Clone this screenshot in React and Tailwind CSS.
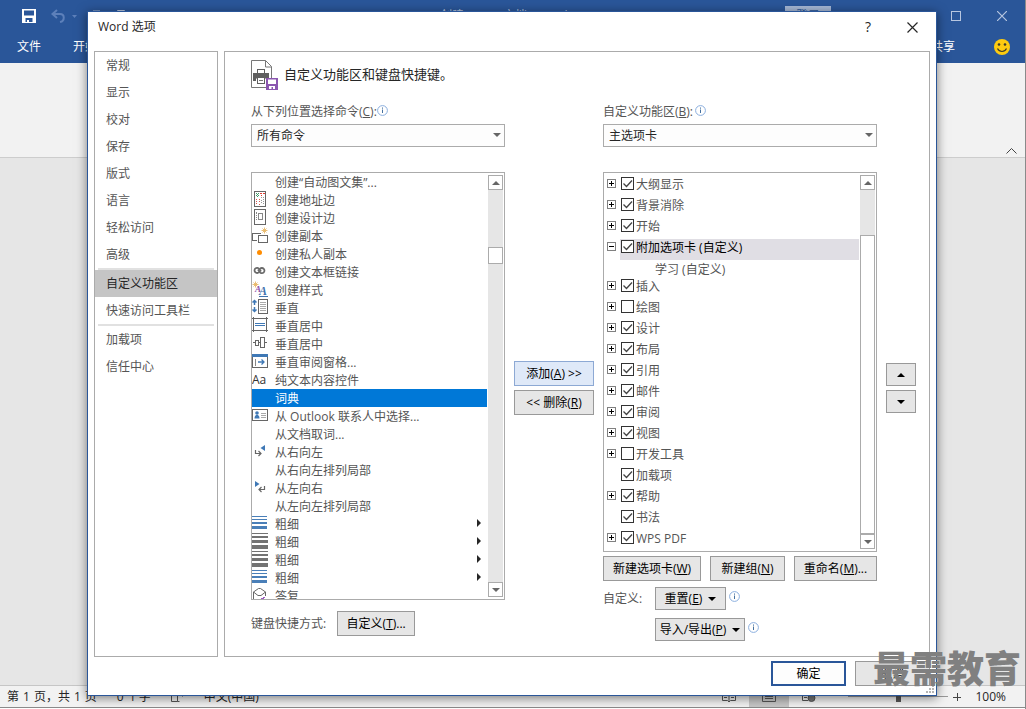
import { useState } from "react";

const navGroups = [
  ["常规", "显示", "校对", "保存", "版式", "语言", "轻松访问", "高级"],
  ["自定义功能区", "快速访问工具栏"],
  ["加载项", "信任中心"],
];

const commands = [
  { label: "创建“自动图文集”..." },
  { label: "创建地址边", icon: "address" },
  { label: "创建设计边", icon: "design" },
  { label: "创建副本", icon: "copy" },
  { label: "创建私人副本", icon: "dot" },
  { label: "创建文本框链接", icon: "link" },
  { label: "创建样式", icon: "style" },
  { label: "垂直", icon: "vertical" },
  { label: "垂直居中", icon: "middle" },
  { label: "垂直居中", icon: "alignMiddle" },
  { label: "垂直审阅窗格...", icon: "pane" },
  { label: "纯文本内容控件", icon: "plainText" },
  { label: "词典" },
  { label: "从 Outlook 联系人中选择...", icon: "contact" },
  { label: "从文档取词..." },
  { label: "从右向左", icon: "rtl" },
  { label: "从右向左排列局部" },
  { label: "从左向右", icon: "ltr" },
  { label: "从左向左排列局部" },
  { label: "粗细", icon: "weightBlue", submenu: true },
  { label: "粗细", icon: "weightGray", submenu: true },
  { label: "粗细", icon: "weightGray", submenu: true },
  { label: "粗细", icon: "weightBlue", submenu: true },
  { label: "答复", icon: "reply" },
];

const initialTabs = [
  { label: "大纲显示", checked: true, expand: "+" },
  { label: "背景消除", checked: true, expand: "+" },
  { label: "开始", checked: true, expand: "+" },
  { label: "附加选项卡 (自定义)", checked: true, expand: "-", child: "学习 (自定义)" },
  { label: "插入", checked: true, expand: "+" },
  { label: "绘图", checked: false, expand: "+" },
  { label: "设计", checked: true, expand: "+" },
  { label: "布局", checked: true, expand: "+" },
  { label: "引用", checked: true, expand: "+" },
  { label: "邮件", checked: true, expand: "+" },
  { label: "审阅", checked: true, expand: "+" },
  { label: "视图", checked: true, expand: "+" },
  { label: "开发工具", checked: false, expand: "+" },
  { label: "加载项", checked: true },
  { label: "帮助", checked: true, expand: "+" },
  { label: "书法", checked: true },
  { label: "WPS PDF", checked: true, expand: "+" },
];

const star = (x, y) => (
  <path
    d={`M${x} ${y - 3}v6M${x - 3} ${y}h6M${x - 2} ${y - 2}l4 4M${x + 2} ${y - 2}l-4 4`}
    stroke="#e8b765"
    strokeWidth="0.9"
    shapeRendering="auto"
  />
);

const icons = {
  address: (
    <>
      <rect x="2.5" y="0.5" width="11" height="15" stroke="#666" />
      <path d="M8 2.5h2M11 2.5h2M9 4.5h1" stroke="#e03c31" />
      <path d="M4 2.5h1M6 2.5h1M5 3.5h1M4 4.5h1M6 4.5h1M5 5.5h1" stroke="#3f9c6a" />
      <path d="M4 8.5h1M4 10.5h1M4 12.5h1M7 8.5h1M7 10.5h1M7 13.5h1" stroke="#d8574e" />
      <path d="M11 6.5h1M11 8.5h1M11 10.5h1M9 9.5h1M9 11.5h1M9 6.5h1M11 12.5h1" stroke="#999" />
    </>
  ),
  design: (
    <>
      <rect x="2.5" y="0.5" width="11" height="15" stroke="#666" />
      <rect x="6.5" y="4.5" width="4" height="6" stroke="#888" />
      <path d="M4.5 3v2M4.5 6v1M4.5 8v1M4.5 10v1" stroke="#888" />
    </>
  ),
  copy: (
    <>
      <path d="M9 6.5H0.5v7H5" stroke="#666" />
      <rect x="6.5" y="8.5" width="9" height="7" stroke="#666" />
      {star(12.5, 3.5)}
    </>
  ),
  dot: <circle cx="7.5" cy="7.5" r="2.5" fill="#ff8c00" shapeRendering="auto" />,
  link: (
    <g stroke="#6a6a6a" strokeWidth="1.8" shapeRendering="auto">
      <path d="M7 9.2A2.6 2.6 0 1 1 7.2 5.8L9 8.5" />
      <path d="M8 5.8A2.6 2.6 0 1 1 7.8 9.2L6 6.5" />
    </g>
  ),
  style: (
    <>
      {star(3.5, 3.5)}
      <g fontFamily="Liberation Serif, serif" fontStyle="italic" fontWeight="bold">
        <text x="3" y="11" fontSize="9" fill="#8a4ea8">A</text>
        <text x="7" y="14" fontSize="12" fill="#3f73ae">A</text>
      </g>
      <path d="M7 15.5h9" stroke="#3f73ae" />
    </>
  ),
  vertical: (
    <>
      <path
        d="M2.5 1.5v4.500M2.5 8v4.5M0.5 3.5l2-2 2 2M0.5 10.5l2 2 2-2"
        stroke="#3f78b5"
        strokeWidth="1.5"
        shapeRendering="auto"
      />
      <rect x="6.5" y="0.5" width="9" height="14" stroke="#666" />
      <path d="M8 3.5h6M8 5.5h6M8 7.5h6M8 9.5h6M8 11.5h6" stroke="#aaa" />
    </>
  ),
  middle: (
    <>
      <path d="M1.5 0v15M14.5 0v15M0 1.5h16M0 13.5h16" stroke="#666" />
      <path d="M3 6.5h10M3 8.5h10" stroke="#3f78b5" />
    </>
  ),
  alignMiddle: (
    <>
      <path d="M1 7.5h2M7 7.5h1M13 7.5h2" stroke="#666" />
      <rect x="3.5" y="5.5" width="3" height="5" stroke="#666" />
      <rect x="8.5" y="2.5" width="4" height="10" stroke="#666" />
    </>
  ),
  pane: (
    <>
      <rect x="0.5" y="1.5" width="15" height="13" stroke="#666" />
      <rect x="0" y="1" width="16" height="3" fill="#3f78b5" />
      <path d="M3.5 6v7" stroke="#888" />
      <path d="M6 9h6M9.5 6.5L12 9l-2.5 2.5" stroke="#3f78b5" strokeWidth="1.3" shapeRendering="auto" />
    </>
  ),
  plainText: (
    <text x="0" y="13" fontSize="12" fill="#333" fontFamily="Open Sans, sans-serif">Aa</text>
  ),
  contact: (
    <>
      <rect x="0.5" y="2.5" width="15" height="11" stroke="#666" />
      <circle cx="5" cy="6" r="1.8" fill="#3f78b5" shapeRendering="auto" />
      <path d="M2.5 11.5c0-5 5-5 5 0z" fill="#3f78b5" shapeRendering="auto" />
      <path d="M9 6.5h5M9 8.5h5M9 10.5h5" stroke="#aaa" />
    </>
  ),
  rtl: (
    <>
      <path d="M13 2v6L8.5 5z" fill="#3f78b5" shapeRendering="auto" />
      <path d="M3.5 7v3.5H9M6.5 8L9 10.5 6.5 13" stroke="#666" strokeWidth="1.2" shapeRendering="auto" />
    </>
  ),
  ltr: (
    <>
      <path d="M3 2v6l4.5-3z" fill="#3f78b5" shapeRendering="auto" />
      <path d="M12.5 7v3.5H7M9.5 8L7 10.5 9.5 13" stroke="#666" strokeWidth="1.2" shapeRendering="auto" />
    </>
  ),
  weightBlue: <path d="M0 1h15v1H0zM0 4h15v1H0zM0 7h15v2H0zM0 11h15v3H0z" fill="#4a7fb8" />,
  weightGray: <path d="M0 0h16v1H0zM0 3h16v2H0zM0 7h16v3H0zM0 12h16v4H0z" fill="#737373" />,
  reply: (
    <>
      <path d="M1.5 13V5l5-3.5h2l5 3.5v4M1.5 5l4.5 3.500h3L13.5 5" stroke="#666" shapeRendering="auto" />
      <path d="M9 11.5h3M11 10.5h2" stroke="#9a5cc0" />
    </>
  ),
};

const Icon = ({ name }) => (
  <svg width="16" height="16" viewBox="0 0 16 16" fill="none" shapeRendering="crispEdges" className="shrink-0">
    {name && icons[name]}
  </svg>
);

const Triangle = ({ up, className }) => (
  <svg width="8" height="4" viewBox="0 0 8 4" fill="currentColor" className={className} aria-hidden="true">
    <path d={up ? "M0 4h8L4 0z" : "M0 0h8L4 4z"} />
  </svg>
);

const InfoIcon = () => (
  <svg width="11" height="11" viewBox="0 0 11 11" fill="none" className="shrink-0" aria-hidden="true">
    <circle cx="5.5" cy="5.5" r="4.9" stroke="#8aaede" />
    <path d="M5.5 4.5V8M5.5 2.5v1.2" stroke="#44709f" />
  </svg>
);

const FloppyIcon = ({ className }) => (
  <svg viewBox="0 0 14 14" className={className} aria-hidden="true">
    <path d="M0 0h14v14H0zM2 1.5v5h10v-5zM3.5 9v4H5v-2h2v2h3.5V9z" fill="currentColor" fillRule="evenodd" />
  </svg>
);

const Button = ({ className = "", children, ...rest }) => (
  <button
    type="button"
    className={`flex items-center justify-center border border-[#999] bg-[#e6e6e6] text-black whitespace-nowrap ${className}`}
    {...rest}
  >
    {children}
  </button>
);

const ScrollBar = ({ before, thumb }) => (
  <div className="my-0.5 mr-px flex w-[15px] shrink-0 flex-col bg-[#e6e6e6] text-[#666]">
    <button
      type="button"
      aria-label="向上滚动"
      className="flex h-[15px] shrink-0 items-center justify-center border border-[#ababab] bg-white"
    >
      <Triangle up />
    </button>
    <div className={before}></div>
    <div className={`border border-[#ababab] bg-white ${thumb}`}></div>
    <button
      type="button"
      aria-label="向下滚动"
      className="mt-auto flex h-[15px] shrink-0 items-center justify-center border border-[#ababab] bg-white"
    >
      <Triangle />
    </button>
  </div>
);

const Dropdown = ({ id, value }) => (
  <div className="relative">
    <select
      id={id}
      defaultValue={value}
      className="block h-[23px] w-full appearance-none border border-[#ababab] bg-[#fdfdfd] pl-[5px] pr-5 text-[#262626]"
    >
      <option>{value}</option>
    </select>
    <Triangle className="pointer-events-none absolute right-1 top-[9px] text-[#666]" />
  </div>
);

const AppWindow = () => (
  <div className="flex h-full flex-col border-r border-[#8a8a8a] bg-[#e6e6e6]">
    <header className="bg-[#2a5699] text-white">
      <div className="flex h-[31px] items-center justify-between pl-[22px] pr-[18px]">
        <div className="flex items-center">
          <FloppyIcon className="size-3.5" />
          <svg width="26" height="14" viewBox="0 0 26 14" fill="none" className="ml-[15px]" aria-hidden="true">
            <path d="M1.5 5H9c5 0 5 7 0 8M6 1L1.5 5 6 9" stroke="#5d80ba" strokeWidth="2" />
            <path d="M21 6h5l-2.5 3z" fill="#5d80ba" />
          </svg>
          <svg width="70" height="12" viewBox="0 0 70 12" fill="none" className="ml-3" aria-hidden="true">
            <path d="M4 1h7M28.5 12V0.500h7l3 3V12" stroke="#b7c6e0" />
            <path d="M63 2h5" stroke="#b7c6e0" strokeWidth="2" />
          </svg>
        </div>
        <span className="ml-16 text-[#b7c6e0]">创建 DOCX 文档 - Word</span>
        <div className="flex items-center">
          <button type="button" className="h-5 w-[46px] bg-[#a6b8d6] text-[#2a5699]">登录</button>
          <svg width="13" height="10" viewBox="0 0 13 10" fill="none" className="ml-[26px]" aria-hidden="true">
            <path d="M0.5 0.5h12v9H0.5zM0 3.5h13" stroke="#a6b8d6" />
          </svg>
          <svg width="10" height="10" viewBox="0 0 10 10" fill="none" className="ml-[81px]" aria-hidden="true">
            <rect x="0.5" y="0.5" width="9" height="9" stroke="#b7c6e0" />
          </svg>
          <svg width="10" height="10" viewBox="0 0 10 10" fill="none" className="ml-9" aria-hidden="true">
            <path d="M0 0l10 10M10 0L0 10" stroke="#b7c6e0" strokeWidth="1.2" />
          </svg>
        </div>
      </div>
      <div className="flex h-8 items-center justify-between pl-[17px] pr-[15px]">
        <nav className="flex gap-8">
          <a href="#file">文件</a>
          <a href="#home">开始</a>
        </nav>
        <div className="flex items-center gap-[39px]">
          <a href="#share">共享</a>
          <svg width="16" height="16" viewBox="0 0 16 16" fill="none" aria-hidden="true">
            <circle cx="8" cy="8" r="8" fill="#fdcb10" />
            <circle cx="5" cy="5.5" r="1.3" fill="#3e3a2a" />
            <circle cx="11" cy="5.5" r="1.3" fill="#3e3a2a" />
            <path d="M3.5 9.5c2 4 7 4 9 0" stroke="#3e3a2a" strokeWidth="1.2" />
          </svg>
        </div>
      </div>
    </header>
    <div className="flex h-[95px] items-end justify-end border-b border-[#cdcdcd] bg-[#f2f2f2] pb-[3px] pr-2">
      <svg width="11" height="6" viewBox="0 0 11 6" fill="none" aria-hidden="true">
        <path d="M0.5 5.5l5-5 5 5" stroke="#444" />
      </svg>
    </div>
    <div className="flex-1"></div>
    <footer className="flex h-[22px] items-center justify-between border-t border-[#c6c6c6] bg-[#f2f2f2] pl-[7px] pr-[19px] text-[#262626]">
      <div className="flex items-center">
        <div className="flex gap-1">
          <span>第</span>
          <span>1</span>
          <span>页，共</span>
          <span>1</span>
          <span>页</span>
        </div>
        <span className="ml-5">0 个字</span>
        <svg width="13" height="10" viewBox="0 0 13 10" fill="none" className="ml-5" aria-hidden="true">
          <path d="M6.5 9.5h-6v-8h6zM6.5 1.5h5v3M6.5 9.5h2" stroke="#555" />
        </svg>
        <span className="ml-5">中文(中国)</span>
      </div>
      <div className="flex h-full items-center">
        <svg width="14" height="12" viewBox="0 0 14 12" fill="none" aria-hidden="true">
          <path
            d="M0.5 1.5h5l1.5 1 1.5-1h5v8h-5L7 11 5.5 9.5h-5zM7 2v9M2 4.5h3M2 6.5h3M9 4.5h3M9 6.5h3"
            stroke="#555"
          />
        </svg>
        <div className="ml-[13px] flex h-full w-10 items-center justify-center bg-[#c6c6c6]">
          <svg width="14" height="12" viewBox="0 0 14 12" fill="none" aria-hidden="true">
            <path d="M0.5 0.5h13v10H0.5zM3 3.5h8M3 5.5h8M3 7.5h8" stroke="#555" />
          </svg>
        </div>
        <svg width="14" height="12" viewBox="0 0 14 12" fill="none" className="ml-[13px]" aria-hidden="true">
          <path d="M6 9.5H0.5v-8h11M2 4.5h4M2 6.5h3" stroke="#555" />
          <circle cx="9.5" cy="7" r="3.5" fill="#777" stroke="#555" />
        </svg>
        <input
          type="range"
          aria-label="缩放"
          defaultValue="50"
          className="ml-8 h-px w-[100px] appearance-none bg-[#999] [&::-webkit-slider-thumb]:h-[11px] [&::-webkit-slider-thumb]:w-[5px] [&::-webkit-slider-thumb]:appearance-none [&::-webkit-slider-thumb]:bg-[#555]"
        />
        <svg width="8" height="8" viewBox="0 0 8 8" fill="none" className="ml-[5px]" aria-hidden="true">
          <path d="M0 4.5h8M4.5 0v8" stroke="#444" />
        </svg>
        <span className="ml-3.5">100%</span>
      </div>
    </footer>
    <div className="h-px bg-[#8a8a8a]"></div>
    <div className="h-px bg-white"></div>
  </div>
);

const CommandList = () => {
  const [selected, setSelected] = useState(12);

  return (
    <div className="flex min-h-0 flex-1 border border-[#ababab] bg-white">
      <ul className="mr-px h-full min-w-0 flex-1 overflow-hidden">
        {commands.map((command, index) => (
          <li key={index}>
            <button
              type="button"
              onClick={() => setSelected(index)}
              className={`flex h-[18px] w-full items-start gap-[7px] text-left ${
                index === selected ? "bg-[#0078d7] text-white" : ""
              }`}
            >
              <Icon name={command.icon} />
              <span className="flex-1 leading-5">{command.label}</span>
              {command.submenu && (
                <svg width="4" height="8" viewBox="0 0 4 8" className="mr-1.5 mt-1" aria-hidden="true">
                  <path d="M0 0v8l4-4z" fill="#262626" />
                </svg>
              )}
            </button>
          </li>
        ))}
      </ul>
      <ScrollBar before="h-[57px]" thumb="h-[17px]" />
    </div>
  );
};

const TabTree = () => {
  const [tabs, setTabs] = useState(initialTabs);

  const toggleTab = (index) => {
    setTabs((prev) => prev.map((tab, idx) => (idx === index ? { ...tab, checked: !tab.checked } : tab)));
  };

  return (
    <div className="flex min-h-0 flex-1 border border-[#ababab] bg-white">
      <ul className="mr-px h-full min-w-0 flex-1 overflow-hidden pl-[3px] pt-[3px]">
        {tabs.map((tab, index) => (
          <li key={tab.label}>
            <div className="flex h-[21px]">
              <div className="w-[13px] shrink-0 pt-[3px]">
                {tab.expand && (
                  <button type="button" aria-label="展开" className="block">
                    <svg width="9" height="9" viewBox="0 0 9 9" fill="none" shapeRendering="crispEdges">
                      <rect x="0.5" y="0.5" width="8" height="8" stroke="#808080" />
                      <path d={tab.expand === "+" ? "M2 4.5h5M4.5 2v5" : "M2 4.5h5"} stroke="#000" />
                    </svg>
                  </button>
                )}
              </div>
              <label
                className={`flex flex-1 gap-0.5 pl-px pt-px ${tab.child ? "bg-[#e0dee4] text-black" : ""}`}
              >
                <span className="relative size-[13px] shrink-0">
                  <input
                    type="checkbox"
                    checked={tab.checked}
                    onChange={() => toggleTab(index)}
                    className="block size-[13px] appearance-none border border-[#333] bg-white"
                  />
                  {tab.checked && (
                    <svg
                      width="13"
                      height="13"
                      viewBox="0 0 13 13"
                      fill="none"
                      className="pointer-events-none absolute inset-0"
                    >
                      <path d="M2.5 6.5l3 3 5.5-6" stroke="#444" strokeWidth="1.3" />
                    </svg>
                  )}
                </span>
                <span className="leading-4">{tab.label}</span>
              </label>
            </div>
            {tab.child && <div className="h-[18px] pl-12 leading-5">{tab.child}</div>}
          </li>
        ))}
      </ul>
      <ScrollBar before="h-[45px]" thumb="flex-1" />
    </div>
  );
};

const OptionsDialog = () => {
  const [section, setSection] = useState("自定义功能区");

  return (
    <div
      role="dialog"
      aria-label="Word 选项"
      className="absolute bottom-[13px] left-[87px] right-[89px] top-[11px] flex flex-col border border-[#2a5699] bg-white text-[#555] shadow-[0_2px_10px_rgba(0,0,0,0.5)]"
    >
      <div className="flex h-[39px] shrink-0 items-start justify-between pl-2.5 pr-[18px] pt-1.5 text-[#262626]">
        <span className="leading-[18px]">Word 选项</span>
        <div className="flex items-center gap-9">
          <button type="button" className="text-sm leading-[18px]">?</button>
          <button type="button" aria-label="关闭">
            <svg width="11" height="11" viewBox="0 0 11 11" fill="none">
              <path d="M0.5 0.5l10 10M10.5 0.5l-10 10" stroke="#262626" strokeWidth="1.2" />
            </svg>
          </button>
        </div>
      </div>

      <div className="flex min-h-0 flex-1 gap-1.5 px-1.5">
        <nav className="w-[124px] shrink-0 border border-[#ababab]">
          {navGroups.map((group, index) => (
            <div key={index}>
              {index > 0 && <div className="mx-[3px] h-0.5 bg-[#e1e1e1]"></div>}
              {group.map((item) => (
                <button
                  key={item}
                  type="button"
                  onClick={() => setSection(item)}
                  className={`block h-[27px] w-full pl-[11px] text-left ${
                    item === section ? "bg-[#c5c5c5] text-[#262626]" : ""
                  }`}
                >
                  {item}
                </button>
              ))}
            </div>
          ))}
        </nav>

        <main className="flex min-w-0 flex-1 flex-col border border-[#ababab] pb-[15px] pl-[26px] pr-[13px] pt-2">
          <div className="flex items-center gap-1.5 text-[#262626]">
            <svg width="27" height="30" viewBox="0 0 27 30" fill="none" aria-hidden="true">
              <path d="M0.5 0.5h14l6 6V18M0.5 0.5v27H15M14.5 0.5v6.500h6" stroke="#777" />
              <path d="M2 13h16v8h-3v-2.500H5V21H2z" fill="#5f5f5f" />
              <rect x="6.5" y="9.5" width="7" height="4" fill="#fff" stroke="#5f5f5f" />
              <rect x="6.5" y="17.5" width="7" height="6" fill="#fff" stroke="#5f5f5f" />
              <path d="M8 20.5h4" stroke="#777" />
              <path d="M15 18h12v12H15z" fill="#8b57b0" />
              <path d="M17 19.5h8V24h-8zM18 26h6v3h-2v-2h-1.500v2H18z" fill="#fff" />
            </svg>
            <h1 className="pb-0.5 text-[13px] leading-4">自定义功能区和键盘快捷键。</h1>
          </div>

          <div className="mt-[13px] flex min-h-0 flex-1 gap-[9px]">
            <div className="flex min-w-0 flex-[254_1_0%] flex-col">
              <div className="flex h-[21px] items-start">
                <label htmlFor="command-source" className="leading-[18px]">
                  从下列位置选择命令(<u>C</u>):
                </label>
                <span className="pt-0.5"><InfoIcon /></span>
              </div>
              <Dropdown id="command-source" value="所有命令" />
              <div className="h-[25px] shrink-0"></div>
              <CommandList />
              <div className="mb-[5px] mt-[11px] flex shrink-0 items-center gap-[11px]">
                <span>键盘快捷方式:</span>
                <Button className="h-[25px] w-[78px]">
                  <span>自定义(<u>T</u>)...</span>
                </Button>
              </div>
            </div>

            <div className="flex w-20 shrink-0 flex-col gap-1 pt-[258px]">
              <button type="button" className="h-[25px] border border-[#8da9d4] bg-[#dfe9f8] text-black">
                添加(<u>A</u>) &gt;&gt;
              </button>
              <Button className="h-[25px]">
                <span>&lt;&lt; 删除(<u>R</u>)</span>
              </Button>
            </div>

            <div className="flex min-w-0 flex-[274_1_0%] flex-col">
              <div className="flex h-[21px] items-start gap-0.5">
                <label htmlFor="ribbon-source" className="leading-[18px]">
                  自定义功能区(<u>B</u>):
                </label>
                <span className="pt-0.5"><InfoIcon /></span>
              </div>
              <Dropdown id="ribbon-source" value="主选项卡" />
              <div className="h-[25px] shrink-0"></div>
              <TabTree />
              <div className="mt-1 flex shrink-0 justify-between">
                <Button className="h-[25px] w-[98px]">
                  <span>新建选项卡(<u>W</u>)</span>
                </Button>
                <Button className="h-[25px] w-[75px]">
                  <span>新建组(<u>N</u>)</span>
                </Button>
                <Button className="h-[25px] w-[83px]">
                  <span>重命名(<u>M</u>)...</span>
                </Button>
              </div>
              <div className="mt-1.5 flex shrink-0">
                <span className="w-[52px] leading-[23px]">自定义:</span>
                <div className="flex flex-col gap-2">
                  <div className="flex gap-[3px]">
                    <Button className="h-[23px] w-[71px] gap-1.5">
                      <span>重置(<u>E</u>)</span>
                      <Triangle />
                    </Button>
                    <span className="pt-1"><InfoIcon /></span>
                  </div>
                  <div className="flex gap-[3px]">
                    <Button className="h-[23px] w-[90px] gap-1.5">
                      <span>导入/导出(<u>P</u>)</span>
                      <Triangle />
                    </Button>
                    <span className="pt-1"><InfoIcon /></span>
                  </div>
                </div>
              </div>
            </div>

            <div className="flex w-[30px] shrink-0 flex-col gap-1 pt-[260px]">
              <Button className="h-[23px]" aria-label="上移"><Triangle up /></Button>
              <Button className="h-[23px]" aria-label="下移"><Triangle /></Button>
            </div>
          </div>
        </main>
      </div>

      <div className="flex h-[38px] shrink-0 justify-end gap-[9px] pr-1.5 pt-1">
        <button type="button" className="h-[25px] w-[75px] border-2 border-[#2a5699] bg-[#fdfdfd] text-black">
          确定
        </button>
        <Button className="h-[25px] w-[75px]">取消</Button>
      </div>
      <svg
        width="8"
        height="8"
        viewBox="0 0 8 8"
        fill="#b5b5b5"
        className="absolute bottom-0.5 right-0.5"
        aria-hidden="true"
      >
        <path d="M6 0h2v2H6zM3 3h2v2H3zM6 3h2v2H6zM0 6h2v2H0zM3 6h2v2H3zM6 6h2v2H6z" />
      </svg>
    </div>
  );
};

const App = () => {
  return (
    <div className="relative h-screen overflow-hidden font-['Open_Sans','Noto_Sans_CJK_SC',sans-serif] text-xs">
      <AppWindow />
      <OptionsDialog />
      <div className="pointer-events-none absolute bottom-5 right-[5px] text-[37px] font-black leading-10 text-[#808080]">
        最需教育
      </div>
    </div>
  );
};

export default App;
